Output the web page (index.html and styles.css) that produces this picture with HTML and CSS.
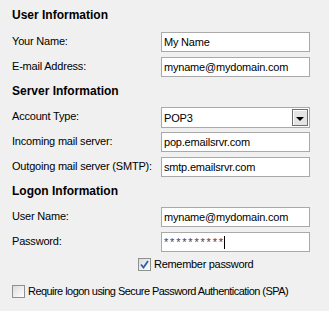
FILE: index.html
```html
<!DOCTYPE html>
<html lang="en">

<head>
    <meta charset="utf-8">
    <title>Account Settings</title>
    <link rel="stylesheet" href="styles.css">
</head>

<body>
    <form class="indstillinger">
        <h2 class="overskrift forste">User Information</h2>
        <div class="raekke">
            <label>Your Name:</label>
            <div class="felt">My Name</div>
        </div>
        <div class="raekke">
            <label>E-mail Address:</label>
            <div class="felt">myname@mydomain.com</div>
        </div>

        <h2 class="overskrift">Server Information</h2>
        <div class="raekke">
            <label>Account Type:</label>
            <div class="felt vaelg">
                <span>POP3</span>
                <span class="pil"></span>
            </div>
        </div>
        <div class="raekke">
            <label>Incoming mail server:</label>
            <div class="felt">pop.emailsrvr.com</div>
        </div>
        <div class="raekke">
            <label>Outgoing mail server (SMTP):</label>
            <div class="felt">smtp.emailsrvr.com</div>
        </div>

        <h2 class="overskrift">Logon Information</h2>
        <div class="raekke">
            <label>User Name:</label>
            <div class="felt">myname@mydomain.com</div>
        </div>
        <div class="raekke">
            <label>Password:</label>
            <div class="felt kode">**********<span class="markoer"></span></div>
        </div>

        <div class="afkryds husk">
            <span class="boks valgt">
                <svg width="9" height="9" viewBox="0 0 9 9">
                    <path d="M1 4.5 L3.5 7.5 L8 1" fill="none" stroke="#2a5fb8" stroke-width="1.8"/>
                </svg>
            </span>
            Remember password
        </div>
        <div class="afkryds spa">
            <span class="boks"></span>
            Require logon using Secure Password Authentication (SPA)
        </div>
    </form>
</body></html>
```
FILE: styles.css
```css
* {
    box-sizing: border-box;
}

body {
    margin: 0;
    background-color: #f0f0f0;
    font-family: 'Liberation Sans', Arial, sans-serif;
    font-size: 11px;
    color: #000;
}

.indstillinger {
    width: 329px;
    height: 311px;
    padding: 0 12px;
    white-space: nowrap;
}

.overskrift {
    margin: 0;
    height: 16px;
    line-height: 16px;
    font-size: 12px;
    font-weight: bold;
}

.forste {
    margin-top: 7px;
    margin-bottom: 9px;
}

.overskrift:not(.forste) {
    margin-top: 6px;
    margin-bottom: 8px;
}

.raekke {
    display: grid;
    grid-template-columns: 149px 149px;
    align-items: center;
    height: 20px;
    margin-bottom: 5px;
}

.raekke label {
    padding-bottom: 3px;
    letter-spacing: -0.2px;
}

.felt {
    height: 20px;
    line-height: 18px;
    border: 1px solid #a9a9a9;
    background-color: #fff;
    padding: 0 2px;
    font-size: 11px;
    letter-spacing: -0.2px;
}

.vaelg {
    display: flex;
    justify-content: space-between;
    align-items: center;
    height: 21px;
    padding-right: 1px;
}

.pil {
    width: 16px;
    height: 17px;
    border: 1px solid #6e6e6e;
    background-color: #e4e4e4;
    box-shadow: inset 1px 1px 0 #fff;
    display: flex;
    align-items: center;
    justify-content: center;
}

.pil::after {
    content: "";
    border-left: 4px solid transparent;
    border-right: 4px solid transparent;
    border-top: 4px solid #000;
    margin-top: 2px;
}

.kode {
    font-size: 11px;
    letter-spacing: 1.8px;
    color: #444;
}

.markoer {
    display: inline-block;
    width: 1px;
    height: 13px;
    margin-left: -1px;
    vertical-align: -3px;
    background-color: #000;
}

.afkryds {
    display: flex;
    align-items: center;
    gap: 3px;
    height: 14px;
    font-size: 11px;
    letter-spacing: -0.3px;
}

.husk {
    margin-top: 4px;
    margin-left: 126px;
}

.spa {
    margin-top: 13px;
    letter-spacing: -0.55px;
}

.boks {
    flex-shrink: 0;
    width: 13px;
    height: 13px;
    border: 1px solid #8e8f8f;
    background: linear-gradient(135deg, #dcdcdc, #fff);
    display: flex;
    align-items: center;
    justify-content: center;
}
```
